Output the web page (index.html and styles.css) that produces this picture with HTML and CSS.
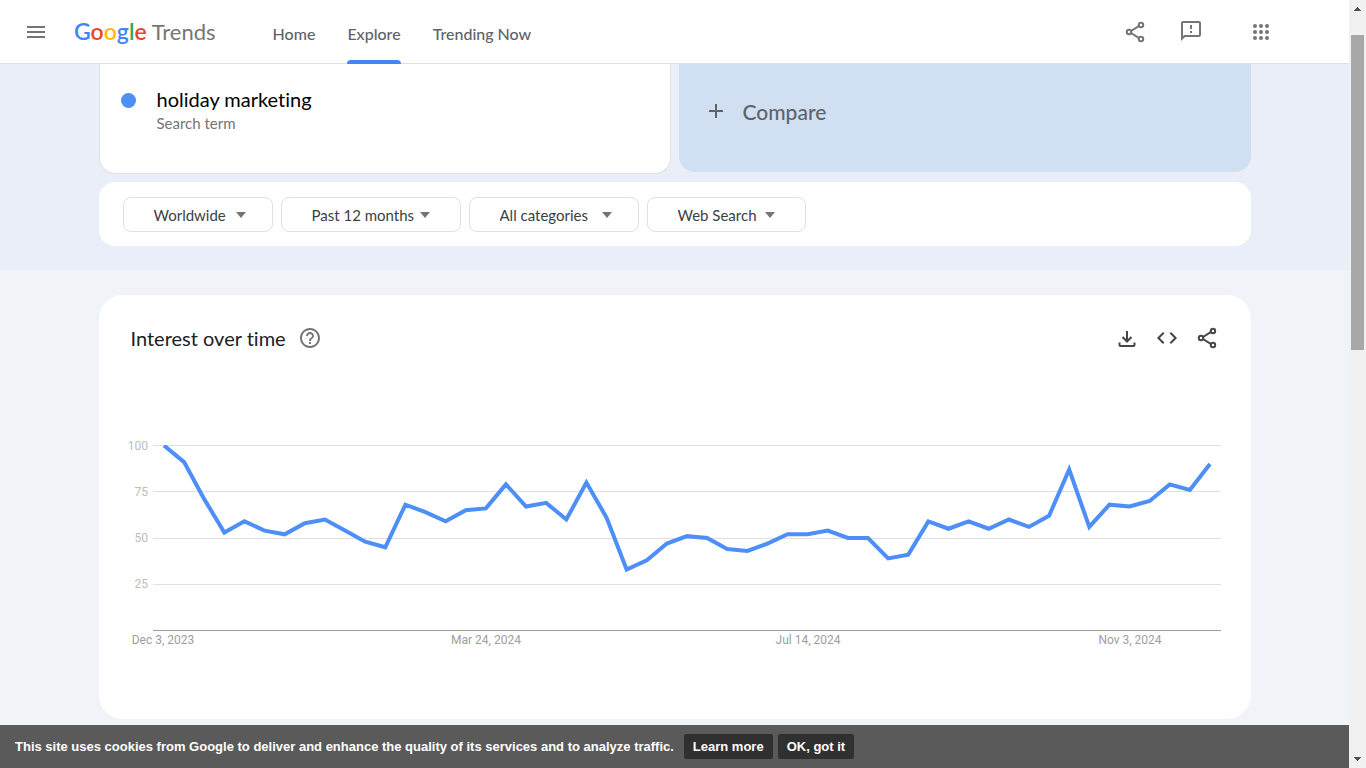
FILE: index.html
```html
<!DOCTYPE html>
<html lang="en">
<head>
<meta charset="utf-8">
<title>holiday marketing - Explore - Google Trends</title>
<link rel="stylesheet" href="styles.css">
</head>
<body>
<svg class="sprite" aria-hidden="true">
  <symbol id="share" viewBox="0 0 24 24">
    <path d="M8 11 16.500 5.600M8 13 16.500 18.400" fill="none" stroke="currentColor" stroke-width="2"/>
    <circle cx="6" cy="12" r="2.200" fill="none" stroke="currentColor" stroke-width="2"/>
    <circle cx="18" cy="5" r="2.200" fill="none" stroke="currentColor" stroke-width="2"/>
    <circle cx="18" cy="19" r="2.200" fill="none" stroke="currentColor" stroke-width="2"/>
  </symbol>
</svg>
<div class="app">
  <div class="page">
    <header class="header">
      <button class="icon-btn" aria-label="Main menu">
        <svg width="24" height="24" viewBox="0 0 24 24"><path fill="currentColor" d="M3 6h18v2H3zM3 11h18v2H3zM3 16h18v2H3z"/></svg>
      </button>
      <a class="logo" href="#" aria-label="Google Trends"><span class="logo-google"><span class="blue">G</span><span class="red">o</span><span class="yellow">o</span><span class="blue">g</span><span class="green">l</span><span class="red">e</span></span><span class="logo-trends">Trends</span></a>
      <nav class="nav">
        <a class="nav-link" href="#">Home</a>
        <a class="nav-link active" href="#" aria-current="page">Explore</a>
        <a class="nav-link" href="#">Trending Now</a>
      </nav>
      <div class="tools">
        <button class="icon-btn" aria-label="Share"><svg width="24" height="24"><use href="#share"/></svg></button>
        <button class="icon-btn" aria-label="Send feedback">
          <svg width="24" height="24" viewBox="0 0 24 24"><path fill="currentColor" d="M20 1H4a2 2 0 0 0-2 2v18l4-4h14a2 2 0 0 0 2-2V3a2 2 0 0 0-2-2zm0 14H5.200L4 16.200V3h16zM11 5h2v4h-2zM11 11h2v2h-2z"/></svg>
        </button>
        <button class="icon-btn apps" aria-label="Google apps">
          <svg width="24" height="24" viewBox="0 0 24 24" fill="currentColor"><circle cx="6" cy="6" r="2"/><circle cx="12" cy="6" r="2"/><circle cx="18" cy="6" r="2"/><circle cx="6" cy="12" r="2"/><circle cx="12" cy="12" r="2"/><circle cx="18" cy="12" r="2"/><circle cx="6" cy="18" r="2"/><circle cx="12" cy="18" r="2"/><circle cx="18" cy="18" r="2"/></svg>
        </button>
      </div>
    </header>
    <main class="main">
      <section class="explore">
        <div class="wrap">
          <div class="terms">
            <div class="term">
              <span class="dot"></span>
              <div>
                <div class="term-name">holiday marketing</div>
                <div class="term-type">Search term</div>
              </div>
            </div>
            <button class="compare">
              <svg width="24" height="24" viewBox="0 0 24 24"><path fill="currentColor" d="M11 5h2v6h6v2h-6v6h-2v-6H5v-2h6z"/></svg>
              Compare
            </button>
          </div>
          <div class="filters">
            <div class="filter place"><select aria-label="Location"><option>Worldwide</option></select><span class="arrow"></span></div>
            <div class="filter time"><select aria-label="Time range"><option>Past 12 months</option></select><span class="arrow"></span></div>
            <div class="filter category"><select aria-label="Category"><option>All categories</option></select><span class="arrow"></span></div>
            <div class="filter source"><select aria-label="Search type"><option>Web Search</option></select><span class="arrow"></span></div>
          </div>
        </div>
      </section>
      <section class="wrap">
        <article class="card">
          <div class="card-head">
            <h2 class="card-title">Interest over time</h2>
            <button class="icon-btn help" aria-label="Help">
              <svg width="24" height="24" viewBox="0 0 24 24"><path fill="currentColor" d="M11 18h2v-2h-2v2zm1-16C6.480 2 2 6.480 2 12s4.480 10 10 10 10-4.480 10-10S17.520 2 12 2zm0 18c-4.410 0-8-3.590-8-8s3.590-8 8-8 8 3.590 8 8-3.590 8-8 8zm0-14c-2.210 0-4 1.790-4 4h2c0-1.100.9-2 2-2s2 .9 2 2c0 2-3 1.750-3 5h2c0-2.250 3-2.500 3-5 0-2.210-1.790-4-4-4z"/></svg>
            </button>
            <div class="card-tools">
              <button class="icon-btn" aria-label="Download CSV"><svg width="24" height="24" viewBox="0 0 24 24" fill="none" stroke="currentColor" stroke-width="2"><path d="M12 5v10M7.500 11l4.500 4.500 4.500-4.500M4.500 16.500V19a1 1 0 0 0 1 1h13a1 1 0 0 0 1-1v-2.500"/></svg></button>
              <button class="icon-btn" aria-label="Embed"><svg width="24" height="24" viewBox="0 0 24 24" fill="none" stroke="currentColor" stroke-width="2"><path d="M8.700 6.700 3.400 12l5.300 5.300M15.300 6.700 20.600 12l-5.300 5.300"/></svg></button>
              <button class="icon-btn" aria-label="Share chart"><svg width="24" height="24"><use href="#share"/></svg></button>
            </div>
          </div>
          <svg class="chart" viewBox="0 0 1096 216" role="img" aria-label="Interest over time for holiday marketing">
            <defs><clipPath id="plot"><path d="M28 10H1096V196H28z"/></clipPath></defs>
            <g class="grid"><path d="M28 10.500H1096M28 56.500H1096M28 103.500H1096M28 149.500H1096"/></g>
            <path class="axis" d="M28 195.500H1096"/>
            <g class="y-labels"><text x="23" y="15">100</text><text x="23" y="61">75</text><text x="23" y="107">50</text><text x="23" y="153">25</text></g>
            <g class="x-labels"><text x="38" y="209">Dec 3, 2023</text><text x="361" y="209">Mar 24, 2024</text><text x="683" y="209">Jul 14, 2024</text><text x="1005" y="209">Nov 3, 2024</text></g>
            <g clip-path="url(#plot)">
              <polyline class="series" transform="translate(39 195.500) scale(20.115 -1.850)" points="0,100 1,91 2,71 3,53 4,59 5,54 6,52 7,58 8,60 9,54 10,48 11,45 12,68 13,64 14,59 15,65 16,66 17,79 18,67 19,69 20,60 21,80 22,61 23,33 24,38 25,47 26,51 27,50 28,44 29,43 30,47 31,52 32,52 33,54 34,50 35,50 36,39 37,41 38,59 39,55 40,59 41,55 42,60 43,56 44,62 45,87 46,56 47,68 48,67 49,70 50,79 51,76 52,90"/>
            </g>
          </svg>
        </article>
      </section>
    </main>
    <footer class="cookies">
      <span class="cookies-text">This site uses cookies from Google to deliver and enhance the quality of its services and to analyze traffic.</span>
      <a class="cookies-btn" href="#">Learn more</a>
      <button class="cookies-btn">OK, got it</button>
    </footer>
  </div>
  <div class="scrollbar" aria-hidden="true">
    <svg width="17" height="17" shape-rendering="crispEdges"><path fill="#505050" d="M5 11 8.500 7 12 11z"/></svg>
    <div class="track"><div class="thumb"></div></div>
    <svg width="17" height="17" shape-rendering="crispEdges"><path fill="#505050" d="M5 6 8.500 10 12 6z"/></svg>
  </div>
</div>
</body>
</html>
```
FILE: styles.css
```css
* { box-sizing: border-box; }
body { margin: 0; font-family: Lato, "Open Sans", sans-serif; font-variant-ligatures: none; color: #202124; }
button, select { font: inherit; color: inherit; border: 0; background: none; margin: 0; padding: 0; cursor: pointer; }
a { color: inherit; text-decoration: none; }
svg { display: block; }
.sprite { position: absolute; width: 0; height: 0; }

.app { display: flex; height: 100vh; overflow: hidden; }
.page { flex: 1; min-width: 0; display: flex; flex-direction: column; background: #f0f4f9; }

.header { flex: none; display: flex; align-items: center; height: 64px; padding: 0 76px 0 24px; background: #fff; border-bottom: 1px solid #e0e0e0; color: #757575; }
.icon-btn { flex: none; width: 24px; height: 24px; }
.logo { display: flex; align-items: baseline; gap: 5px; margin-left: 26px; line-height: 32px; font-size: 22px; color: #757575; }
.logo-google { font-size: 23px; font-weight: 600; }
.blue { color: #4285f4; }
.red { color: #ea4335; }
.yellow { color: #fbbc05; }
.green { color: #34a853; }
.nav { display: flex; align-self: stretch; gap: 32px; margin-left: 57px; }
.nav-link { position: relative; display: flex; align-items: center; padding-top: 3px; font-size: 16px; font-weight: 500; color: #5f6368; }
.active::after { content: ""; position: absolute; left: 0; right: 0; bottom: -1px; height: 4px; border-radius: 4px 4px 0 0; background: #4285f4; }
.tools { display: flex; gap: 32px; margin-left: auto; }
.apps { margin-left: 14px; }

.main { flex: 1; min-height: 0; overflow: hidden; }
.wrap { max-width: 1152px; margin: 0 auto; }
.explore { background: #e9eef8; padding-bottom: 24px; }
.terms { display: grid; grid-template-columns: 1fr 1fr; align-items: start; gap: 8px; margin-bottom: 8px; }
.term { display: flex; height: 110px; padding: 23px 21px; gap: 21px; background: #fff; border: 1px solid #e0e0e0; border-top: 0; border-radius: 0 0 16px 16px; }
.dot { width: 15px; height: 15px; margin-top: 6px; border-radius: 50%; background: #4d8ef7; }
.term-name { font-size: 20px; line-height: 24px; color: #000; }
.term-type { font-size: 15px; line-height: 24px; color: #757575; }
.compare { display: flex; align-items: center; gap: 15px; height: 108px; padding: 0 25px 14px; border-radius: 0 0 16px 16px; background: #d0dff2; color: #5f6368; font-size: 21px; font-weight: 500; }
.filters { display: flex; gap: 8px; padding: 15px 24px 14px; border-radius: 16px; background: #fff; }
.filter { position: relative; height: 35px; border: 1px solid #e0e0e0; border-radius: 8px; color: #3c4043; }
.filter select { appearance: none; width: 100%; height: 100%; padding-left: 30px; font-size: 15px; }
.place { width: 150px; }
.time { width: 180px; }
.category { width: 170px; }
.source { width: 159px; }
.arrow { position: absolute; top: 14px; right: 26px; border: 5px solid transparent; border-top: 6px solid #757575; border-bottom: 0; pointer-events: none; }
.time .arrow, .source .arrow { right: 30px; }

.card { margin-top: 25px; padding: 31px 30px 68px 26px; border-radius: 24px; background: #fff; }
.card-head { display: flex; align-items: center; padding: 0 2px 0 6px; }
.card-title { margin: 0; font-size: 20px; font-weight: 400; line-height: 24px; }
.help { margin-left: 12px; color: #757575; }
.card-tools { display: flex; gap: 16px; margin-left: auto; color: #444746; }
.chart { width: 100%; margin-top: 85px; font-family: Roboto, sans-serif; font-size: 12px; }
.grid { stroke: #e0e0e0; }
.axis { stroke: #9e9e9e; }
.y-labels { fill: #bdbdbd; text-anchor: end; }
.x-labels { fill: #9e9e9e; text-anchor: middle; }
.series { fill: none; stroke: #4d8ef7; stroke-width: 4px; vector-effect: non-scaling-stroke; }

.cookies { flex: none; display: flex; align-items: center; height: 43px; padding: 0 15px; background: #5a5a5a; color: #fff; font: bold 13px/25px "Liberation Sans", Arial, sans-serif; }
.cookies-text { margin-right: 10px; }
.cookies-btn { padding: 0 9px; margin-right: 5px; border-radius: 2px; background: #303030; color: #fff; }

.scrollbar { flex: none; width: 17px; display: flex; flex-direction: column; background: #f1f1f1; }
.track { flex: 1; padding: 18px 2px 0; }
.thumb { height: 44%; background: #a8a8a8; }
```
